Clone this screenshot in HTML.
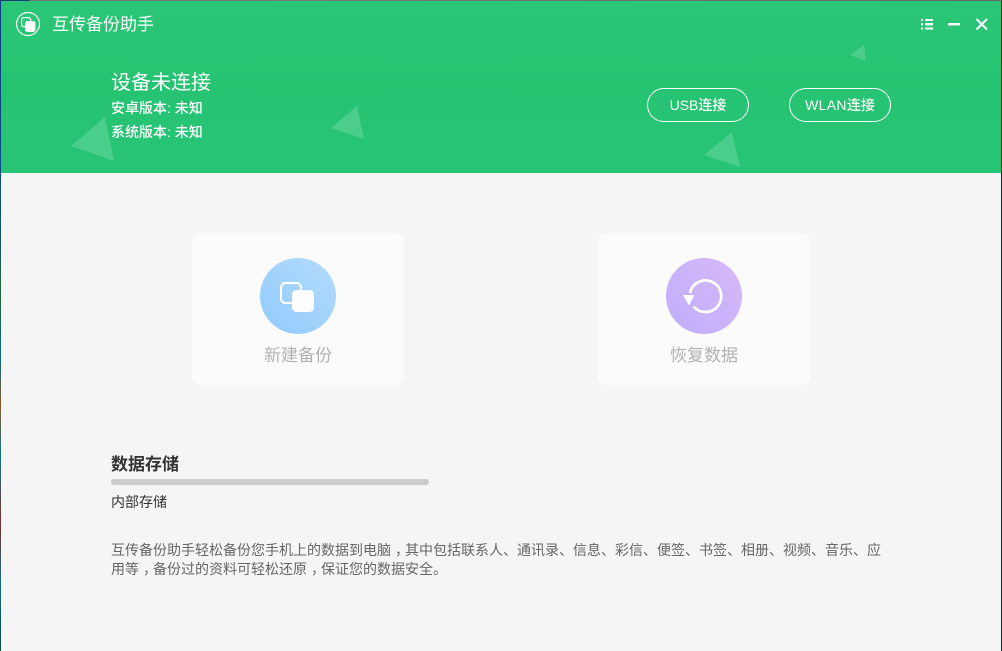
<!DOCTYPE html>
<html lang="zh">
<head>
<meta charset="utf-8">
<style>
html,body{margin:0;padding:0;width:1002px;height:651px;overflow:hidden;background:#0b3a6e;}
body{position:relative;font-family:"Liberation Sans","Noto Sans CJK SC",sans-serif;}
.t{position:absolute;white-space:nowrap;}
#topl{position:absolute;left:0;top:0;width:1002px;height:1px;background:linear-gradient(90deg,#1a3f7a 0,#1a3f7a 3%,#777 3%,#777 26%,#666 100%);}
#left{position:absolute;left:0;top:1px;width:1px;height:650px;background:linear-gradient(180deg,#0b3c8c 0,#0b4c86 30%,#1d6a3a 45%,#0a6a80 55%,#8a5a2a 62%,#0f7585 70%,#7a3030 80%,#0f7080 90%,#0c4a3a 100%);}
#right{position:absolute;right:0;top:1px;width:1px;height:650px;background:#0a2452;}
#win{position:absolute;left:1px;top:1px;width:1000px;height:650px;background:#f5f5f5;overflow:hidden;}
#head{position:absolute;left:1px;top:1px;width:1000px;height:172px;background:linear-gradient(180deg,#2ac676 0,#26c371 50%,#27c476 100%);}
.btn{position:absolute;top:88px;width:100px;height:32px;border:1px solid #fff;border-radius:17px;color:#fff;font-size:14px;line-height:32px;text-align:center;font-weight:500;}
.btn span.w{letter-spacing:.3px;}
.card{position:absolute;top:233px;width:212px;height:152px;background:#fbfbfb;border-radius:9px;}
.lab{font-size:17px;color:#b2b2b2;line-height:22px;top:345px;}
.c{position:relative;left:4px;}
</style>
</head>
<body>
<div id="topl"></div><div id="left"></div><div id="right"></div>
<div id="win"></div>
<div id="head"></div>

<svg style="position:absolute;left:0;top:0" width="1002" height="175" viewBox="0 0 1002 175">
  <g fill="#fff" fill-opacity=".17">
    <polygon points="105,117 71,146 114,161"/>
    <polygon points="357,106 331,128 364,139"/>
    <polygon points="732,132 704,155 740,167"/>
    <polygon points="864,45 850,55 866,61"/>
  </g>
  <circle cx="28" cy="24" r="11.500" fill="none" stroke="#fff" stroke-width="1.200"/>
  <rect x="21.600" y="17.600" width="9" height="9" rx="2" fill="none" stroke="#fff" stroke-width="1.200"/>
  <rect x="25" y="21" width="10.500" height="11" rx="2.500" fill="#fff"/>
  <g fill="#fff">
    <rect x="921" y="19" width="2" height="2"/><rect x="925" y="19" width="8" height="2"/>
    <rect x="921" y="23" width="2" height="2.400"/><rect x="925" y="23" width="8" height="2.400"/>
    <rect x="921" y="27.500" width="2" height="2"/><rect x="925" y="27.500" width="8" height="2"/>
    <rect x="948" y="23" width="12" height="2.400"/>
  </g>
  <path d="M976.500 19L987 29.500M987 19L976.500 29.500" stroke="#fff" stroke-width="2" fill="none"/>
</svg>

<div class="t" style="left:52px;top:14px;font-size:17px;line-height:22px;color:#fff;">互传备份助手</div>
<div class="t" style="left:111px;top:69px;font-size:20px;line-height:28px;color:#fff;">设备未连接</div>
<div class="t" style="left:111px;top:98px;font-size:14px;line-height:20px;color:#fff;font-weight:500;">安卓版本: 未知</div>
<div class="t" style="left:111px;top:122px;font-size:14px;line-height:20px;color:#fff;font-weight:500;">系统版本: 未知</div>

<div class="btn" style="left:647px;"><span>USB</span>连接</div>
<div class="btn" style="left:789px;"><span class="w">WLAN</span>连接</div>

<div class="card" style="left:192px;"></div>
<div class="card" style="left:598px;"></div>

<svg style="position:absolute;left:250px;top:250px" width="110" height="95" viewBox="250 250 110 95">
  <defs>
    <linearGradient id="b" x1="1" y1="0" x2="0" y2="1"><stop offset="0" stop-color="#b3dbfb"/><stop offset="1" stop-color="#92cbfd"/></linearGradient>
  </defs>
  <circle cx="298" cy="296" r="38" fill="url(#b)"/>
  <rect x="281" y="283" width="20" height="20" rx="4.500" fill="none" stroke="#fff" stroke-width="2"/>
  <rect x="292" y="290" width="22" height="22" rx="4.500" fill="#fff"/>
</svg>
<svg style="position:absolute;left:656px;top:250px" width="110" height="95" viewBox="656 250 110 95">
  <defs>
    <linearGradient id="p" x1="1" y1="0" x2="0" y2="1"><stop offset="0" stop-color="#d6b8f8"/><stop offset="1" stop-color="#bfaefb"/></linearGradient>
  </defs>
  <circle cx="704" cy="296" r="38" fill="url(#p)"/>
  <path d="M690 293A15.800 15.800 0 1 1 693.500 306.500" fill="none" stroke="#fff" stroke-width="2.700"/>
  <polygon points="683,295 694.500,295 689,305.500" fill="#fff"/>
</svg>

<div class="t lab" style="left:264px;">新建备份</div>
<div class="t lab" style="left:670px;">恢复数据</div>

<div class="t" style="left:111px;top:453px;font-size:17px;line-height:24px;font-weight:700;color:#333;">数据存储</div>
<div style="position:absolute;left:111px;top:479px;width:318px;height:6px;border-radius:3px;background:#ccc;"></div>
<div class="t" style="left:111px;top:493px;font-size:14px;line-height:18px;color:#333;">内部存储</div>
<div class="t" style="left:111px;top:541px;font-size:14px;line-height:19px;color:#666;">互传备份助手轻松备份您手机上的数据到电脑<span class="c">，</span>其中包括联系人、通讯录、信息、彩信、便签、书签、相册、视频、音乐、应<br>用等<span class="c">，</span>备份过的资料可轻松还原<span class="c">，</span>保证您的数据安全。</div>
</body>
</html>
